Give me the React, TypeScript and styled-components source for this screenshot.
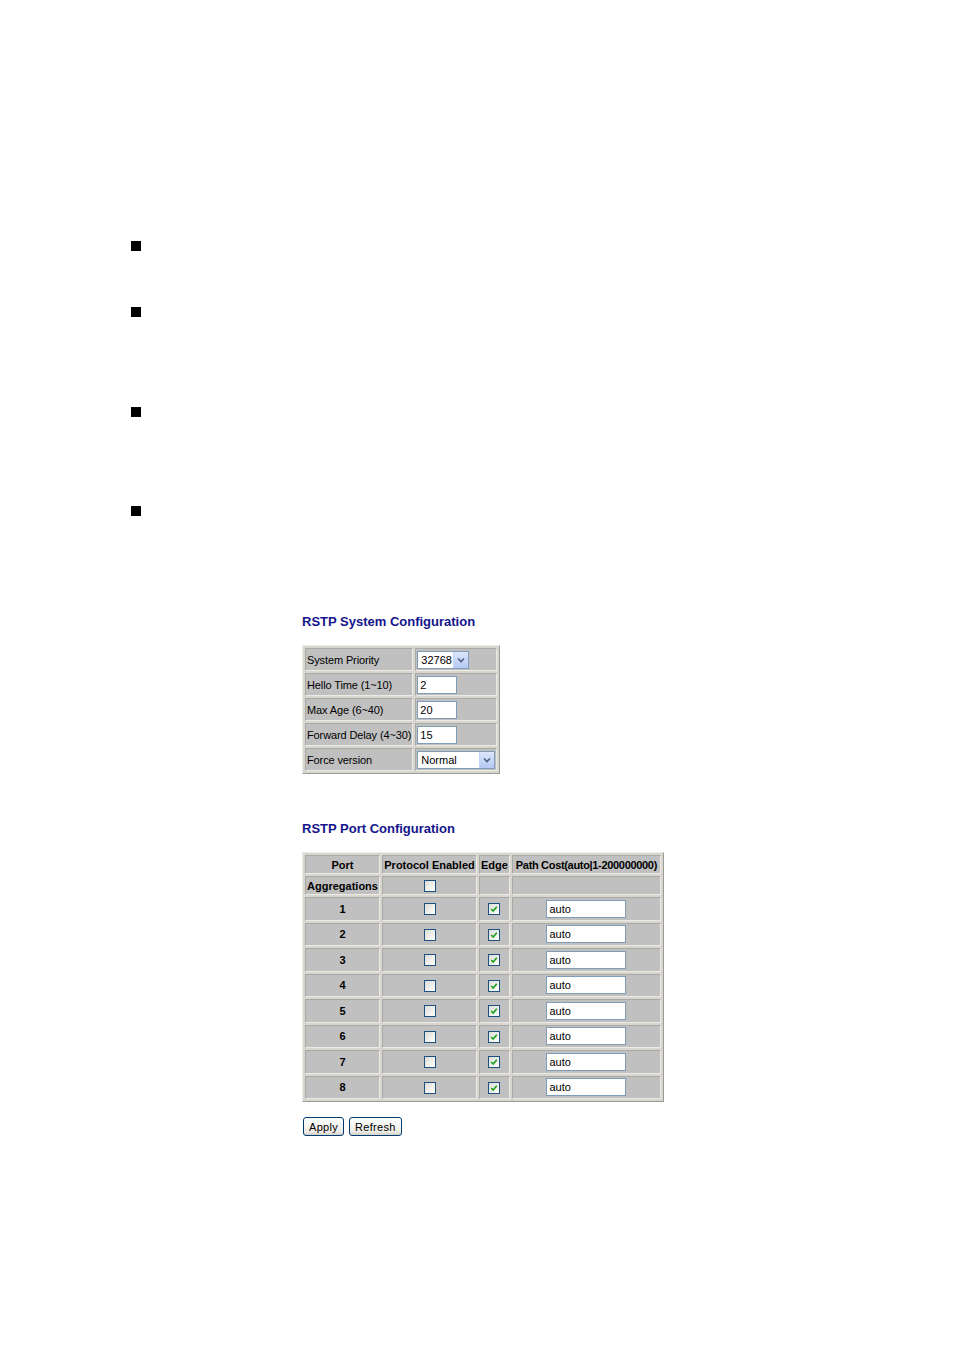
import styled, { createGlobalStyle } from "styled-components";

interface BulletProps {
  $top: number;
};
interface CellProps {
  $align?: string;
  $width?: number;
  $bold?: boolean;
  $spacing?: number;
};
interface TextBoxProps {
  $width: number;
};

const GlobalStyle = createGlobalStyle`
  html, body {
    margin: 0;
    padding: 0;
    background: #ffffff;
  }
  body {
    font-family: "Liberation Sans", Arial, sans-serif;
    color: #000000;
  }
`;

const Page = styled.div`
  width: 954px;
  height: 1351px;
  display: flex;
  flex-direction: column;
`;
const BulletList = styled.div`
  padding-left: 131px;
  display: flex;
  flex-direction: column;
`;
const Bullet = styled.div`
  width: 10px;
  height: 10px;
  background: #000000;
  margin-top: ${(props: BulletProps) => props.$top}px;
`;
const ConfigArea = styled.div`
  margin-left: 302px;
  margin-top: 98px;
  display: flex;
  flex-direction: column;
  align-items: flex-start;
`;
const Title = styled.div`
  font-family: "Liberation Sans", Arial, sans-serif;
  font-weight: 700;
  font-size: 13px;
  line-height: 16px;
  color: #14148c;
  margin-bottom: 15px;
`;
const ConfigTable = styled.table`
  border-collapse: separate;
  border-spacing: 2px;
  background: #d8d6cf;
  border: 1px solid;
  border-color: #eeede8 #9a9a96 #9a9a96 #eeede8;
  font-size: 11px;
`;
const Cell = styled.td`
  background: #c0c0c0;
  border: 1px solid;
  border-color: #a9a9a6 #eceae4 #eceae4 #a9a9a6;
  padding: 0 1px;
  height: 21px;
  white-space: nowrap;
  text-align: ${(props: CellProps) => props.$align || "left"};
  width: ${(props: CellProps) => (props.$width ? `${props.$width}px` : "auto")};
  font-weight: ${(props: CellProps) => (props.$bold ? 700 : 400)};
  letter-spacing: ${(props: CellProps) => props.$spacing || 0}px;
  vertical-align: middle;
`;
const PortCell = styled(Cell)`
  height: 21.5px;
`;
const HeadCell = styled(Cell)`
  height: 17px;
  font-weight: 700;
  text-align: center;
`;
const TextBox = styled.div`
  width: ${(props: TextBoxProps) => props.$width}px;
  height: 18px;
  box-sizing: border-box;
  border: 1px solid #7f9db9;
  background: #ffffff;
  padding-left: 2px;
  line-height: 16px;
  font-size: 11px;
  letter-spacing: 0;
  display: inline-block;
  vertical-align: middle;
  text-align: left;
`;
const SelectBox = styled.div`
  width: ${(props: TextBoxProps) => props.$width}px;
  height: 18px;
  box-sizing: border-box;
  border: 1px solid #7f9db9;
  background: #ffffff;
  display: flex;
  align-items: stretch;
  font-size: 11px;
  letter-spacing: 0;
`;
const SelectValue = styled.span`
  flex: 1;
  padding-left: 3px;
  line-height: 16px;
`;
const SelectArrow = styled.span`
  width: 14px;
  background: linear-gradient(#dce6fb, #b5c9f3);
  border-left: 1px solid #c3d3fd;
  display: flex;
  align-items: center;
  justify-content: center;
`;
const CheckBox = styled.span`
  width: 12px;
  height: 12px;
  box-sizing: border-box;
  border: 1px solid #1c5180;
  background: linear-gradient(135deg, #dcdcd7, #ffffff);
  display: inline-flex;
  align-items: center;
  justify-content: center;
  vertical-align: middle;
`;
const ButtonRow = styled.div`
  display: flex;
  gap: 5px;
  margin-top: 15px;
  margin-left: 1px;
`;
const Button = styled.button`
  font-family: "Liberation Sans", Arial, sans-serif;
  font-size: 11px;
  letter-spacing: 0.3px;
  height: 19px;
  padding: 0 5px;
  border: 1px solid #003c74;
  border-radius: 3px;
  background: linear-gradient(#ffffff, #ecebe6 80%, #d6d0c5);
  color: #000000;
`;
const Spacer = styled.div`
  height: 47px;
`;

const Chevron = () => (
  <svg width="8" height="6" viewBox="0 0 8 6">
    <path d="M1 1.5 L4 4.5 L7 1.5" fill="none" stroke="#4d6185" strokeWidth="1.6" />
  </svg>
);

const Check = ({ checked }: { checked?: boolean }) => (
  <CheckBox>
    {checked && (
      <svg width="8" height="8" viewBox="0 0 8 8">
        <path d="M1.2 4 L3.2 6 L6.8 1.8" fill="none" stroke="#21a121" strokeWidth="1.7" />
      </svg>
    )}
  </CheckBox>
);

const systemRows = [
  { label: "System Priority", value: "32768", kind: "select", width: 52 },
  { label: "Hello Time (1~10)", value: "2", kind: "text", width: 40 },
  { label: "Max Age (6~40)", value: "20", kind: "text", width: 40 },
  { label: "Forward Delay (4~30)", value: "15", kind: "text", width: 40 },
  { label: "Force version", value: "Normal", kind: "select", width: 78 },
];

const ports = ["1", "2", "3", "4", "5", "6", "7", "8"];

export default function App() {
  return (
    <Page>
      <GlobalStyle />
      <BulletList>
        <Bullet $top={241} />
        <Bullet $top={56} />
        <Bullet $top={90} />
        <Bullet $top={89} />
      </BulletList>

      <ConfigArea>
        <Title>RSTP System Configuration</Title>
        <ConfigTable>
          <tbody>
            {systemRows.map((row) => (
              <tr key={row.label}>
                <Cell $width={104} $spacing={-0.12}>
                  {row.label}
                </Cell>
                <Cell $width={77}>
                  {row.kind === "select" ? (
                    <SelectBox $width={row.width}>
                      <SelectValue>{row.value}</SelectValue>
                      <SelectArrow>
                        <Chevron />
                      </SelectArrow>
                    </SelectBox>
                  ) : (
                    <TextBox $width={row.width}>{row.value}</TextBox>
                  )}
                </Cell>
              </tr>
            ))}
          </tbody>
        </ConfigTable>

        <Spacer />

        <Title>RSTP Port Configuration</Title>
        <ConfigTable>
          <tbody>
            <tr>
              <HeadCell $width={71}>Port</HeadCell>
              <HeadCell $width={91}>Protocol Enabled</HeadCell>
              <HeadCell $width={26}>Edge</HeadCell>
              <HeadCell $width={145} $spacing={-0.32}>
                Path Cost(auto|1-200000000)
              </HeadCell>
            </tr>
            <tr>
              <HeadCell>Aggregations</HeadCell>
              <HeadCell>
                <Check />
              </HeadCell>
              <HeadCell />
              <HeadCell />
            </tr>
            {ports.map((port) => (
              <tr key={port}>
                <PortCell $align="center" $bold>
                  {port}
                </PortCell>
                <PortCell $align="center">
                  <Check />
                </PortCell>
                <PortCell $align="center">
                  <Check checked />
                </PortCell>
                <PortCell $align="center">
                  <TextBox $width={80}>auto</TextBox>
                </PortCell>
              </tr>
            ))}
          </tbody>
        </ConfigTable>

        <ButtonRow>
          <Button>Apply</Button>
          <Button>Refresh</Button>
        </ButtonRow>
      </ConfigArea>
    </Page>
  );
}
